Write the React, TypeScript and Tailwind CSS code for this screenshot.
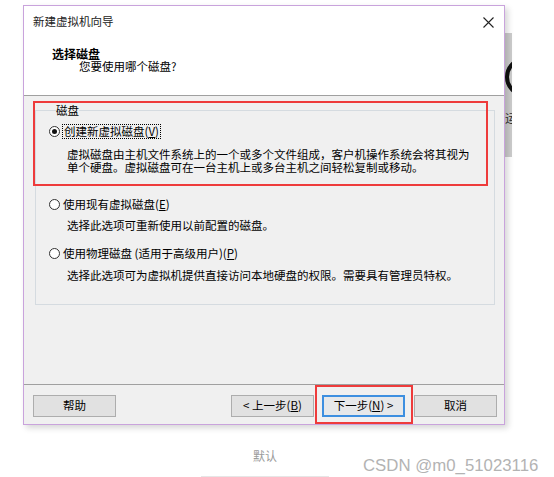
import React from 'react';

function Radio({ checked }: { checked?: boolean }) {
  return (
    <span className="w-[11px] h-[11px] rounded-full border border-[#333] bg-white flex items-center justify-center shrink-0">
      {checked && <span className="w-[5px] h-[5px] rounded-full bg-[#111]" />}
    </span>
  );
}

function Btn({ children, primary, className = '' }: { children: React.ReactNode; primary?: boolean; className?: string }) {
  return (
    <button
      className={`h-[22px] w-[83px] flex items-center justify-center text-[11.5px] leading-none text-black ${
        primary ? 'border-2 border-[#3d8fe0] bg-[#e6e8ea]' : 'border border-[#adadad] bg-[#e1e1e1]'
      } ${className}`}
    >
      {children}
    </button>
  );
}

export default function App() {
  return (
    <div className="relative w-[554px] h-[477px] bg-white overflow-hidden font-['Noto_Sans_CJK_SC',sans-serif]">
      <div className="flex items-start">
        {/* wizard dialog */}
        <div className="relative ml-[23px] mt-[5px] w-[482px] h-[420px] border border-[#c9a3dc] bg-[#f0f0f0] flex flex-col shadow-[3px_3px_6px_rgba(0,0,0,0.16)]">
          <div className="h-[90px] bg-white border-b border-[#a0a0a0] flex flex-col">
            <div className="h-[32px] flex items-center justify-between pl-[9px] pr-[10px]">
              <span className="text-[11.5px] text-[#222]">新建虚拟机向导</span>
              <svg width="11" height="11" viewBox="0 0 11 11">
                <path d="M0.5 0.5 L10.5 10.5 M10.5 0.5 L0.5 10.5" stroke="#222" strokeWidth="1.1" fill="none" />
              </svg>
            </div>
            <div className="mt-[10px] pl-[28px] text-[12px] font-bold leading-[12px] text-black">选择磁盘</div>
            <div className="pl-[55px] text-[11.5px] leading-[12px] text-black">您要使用哪个磁盘?</div>
          </div>

          <div className="flex-1 pt-[8px] pl-[11px] pr-[9px]">
            <fieldset className="h-[201px] border border-[#d5dbe0] pl-[13px] text-[11.5px] text-black">
              <legend className="ml-[7px] leading-[13px]">磁盘</legend>
              <div className="mt-[7px] h-[15px] flex items-center gap-[2px]">
                <Radio checked />
                <span className="border border-dotted border-black leading-[13px] px-[1px]">
                  创建新虚拟磁盘(<span className="underline">V</span>)
                </span>
              </div>
              <div className="mt-[9px] ml-[18px] leading-[13px]">
                <div>虚拟磁盘由主机文件系统上的一个或多个文件组成，客户机操作系统会将其视为</div>
                <div>单个硬盘。虚拟磁盘可在一台主机上或多台主机之间轻松复制或移动。</div>
              </div>
              <div className="mt-[23px] h-[15px] flex items-center gap-[3px]">
                <Radio />
                <span>使用现有虚拟磁盘(<span className="underline">E</span>)</span>
              </div>
              <div className="mt-[6.5px] ml-[18px] leading-[12.5px]">选择此选项可重新使用以前配置的磁盘。</div>
              <div className="mt-[15px] h-[15px] flex items-center gap-[3px]">
                <Radio />
                <span>使用物理磁盘 (适用于高级用户)(<span className="underline">P</span>)</span>
              </div>
              <div className="mt-[7.5px] ml-[18px] leading-[12.5px]">选择此选项可为虚拟机提供直接访问本地硬盘的权限。需要具有管理员特权。</div>
            </fieldset>
          </div>

          <div className="h-[40px] border-t border-[#a0a0a0] flex items-start pt-[9.5px] pl-[9px] pr-[7px]">
            <Btn className="w-[82px]">帮助</Btn>
            <div className="flex-1" />
            <Btn>&lt; 上一步(<span className="underline">B</span>)</Btn>
            <Btn primary className="ml-[8px]">下一步(<span className="underline">N</span>) &gt;</Btn>
            <Btn className="ml-[9px]">取消</Btn>
          </div>

          {/* annotation boxes */}
          <div className="absolute left-[8.5px] top-[94.5px] w-[455px] h-[85px] border-2 border-[#ee3b3b]" />
          <div className="absolute left-[291px] top-[378.5px] w-[98px] h-[39px] border-2 border-[#ee3b3b]" />
        </div>

        {/* window behind the dialog */}
        <div className="mt-[33px] w-[7px] h-[124px] bg-[#cdcdcd] overflow-hidden flex flex-col">
          <svg width="7" height="72" viewBox="0 0 7 72" className="shrink-0">
            <circle cx="20" cy="44" r="18" stroke="#111" strokeWidth="4" fill="none" />
          </svg>
          <span className="mt-[6px] text-[12px] leading-[14px] text-[#333] whitespace-nowrap">运</span>
        </div>
      </div>

      <div className="mt-[23.5px] ml-[253px] text-[12px] leading-[13px] text-[#9b9b9b]">默认</div>
      <div className="mt-[14.5px] ml-[201px] w-[128px] h-px bg-[#e6e6e6]" />

      <div className="absolute left-[363px] top-[455.5px] font-['Liberation_Sans',sans-serif] text-[16.8px] leading-[19px] text-[#b3b3b3] whitespace-nowrap">
        CSDN @m0_51023116
      </div>
    </div>
  );
}
